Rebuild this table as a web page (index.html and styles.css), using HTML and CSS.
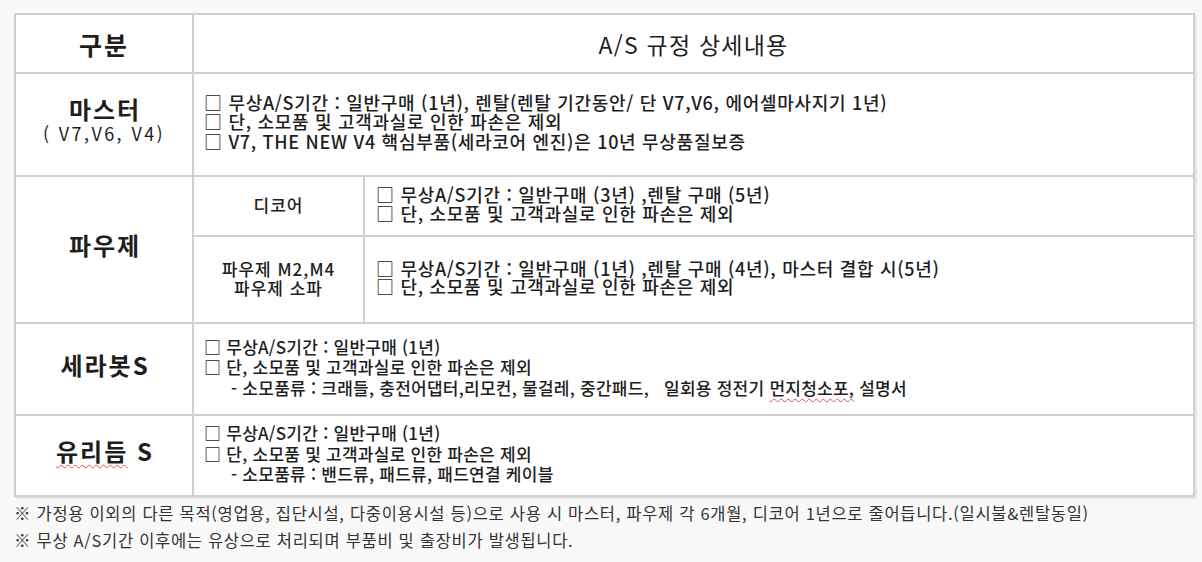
FILE: index.html
```html
<!DOCTYPE html>
<html lang="ko">
<head>
<meta charset="utf-8">
<title>A/S 규정</title>
<link rel="stylesheet" href="styles.css">
</head>
<body>
<div class="page">
  <table class="as-table">
    <colgroup>
      <col class="c-cat">
      <col class="c-sub">
      <col class="c-detail">
    </colgroup>
    <tr class="r-head">
      <th class="h-cat">구분</th>
      <th class="h-detail" colspan="2">A/S 규정 상세내용</th>
    </tr>
    <tr class="r-master">
      <td class="cat">
        <div class="cat-name">마스터</div>
        <div class="cat-sub">( V7,V6, V4)</div>
      </td>
      <td class="detail" colspan="2">
        <div>□ 무상A/S기간 : 일반구매 (1년), 렌탈(렌탈 기간동안/ 단 V7,V6, 에어셀마사지기 1년)</div>
        <div>□ 단, 소모품 및 고객과실로 인한 파손은 제외</div>
        <div>□ V7, THE NEW V4 핵심부품(세라코어 엔진)은 10년 무상품질보증</div>
      </td>
    </tr>
    <tr class="r-decore">
      <td class="cat" rowspan="2"><div class="cat-name">파우제</div></td>
      <td class="sub">디코어</td>
      <td class="detail sub-detail">
        <div>□ 무상A/S기간 : 일반구매 (3년) ,렌탈 구매 (5년)</div>
        <div>□ 단, 소모품 및 고객과실로 인한 파손은 제외</div>
      </td>
    </tr>
    <tr class="r-pauje">
      <td class="sub">
        <div>파우제 M2,M4</div>
        <div>파우제 소파</div>
      </td>
      <td class="detail sub-detail">
        <div>□ 무상A/S기간 : 일반구매 (1년) ,렌탈 구매 (4년), 마스터 결합 시(5년)</div>
        <div>□ 단, 소모품 및 고객과실로 인한 파손은 제외</div>
      </td>
    </tr>
    <tr class="r-serabot">
      <td class="cat"><div class="cat-name">세라봇S</div></td>
      <td class="detail small-detail" colspan="2">
        <div>□ 무상A/S기간 : 일반구매 (1년)</div>
        <div>□ 단, 소모품 및 고객과실로 인한 파손은 제외</div>
        <div class="indent">- 소모품류 : 크래들, 충전어댑터,리모컨, 물걸레, 중간패드, &nbsp; 일회용 정전기 <span class="spell">먼지청소포,</span> 설명서</div>
      </td>
    </tr>
    <tr class="r-yurideum">
      <td class="cat"><div class="cat-name"><span class="spell">유리듬</span> S</div></td>
      <td class="detail small-detail" colspan="2">
        <div>□ 무상A/S기간 : 일반구매 (1년)</div>
        <div>□ 단, 소모품 및 고객과실로 인한 파손은 제외</div>
        <div class="indent">- 소모품류 : 밴드류, 패드류, 패드연결 케이블</div>
      </td>
    </tr>
  </table>
  <div class="notes">
    <p>※ 가정용 이외의 다른 목적(영업용, 집단시설, 다중이용시설 등)으로 사용 시 마스터, 파우제 각 6개월, 디코어 1년으로 줄어듭니다.(일시불&amp;렌탈동일)</p>
    <p>※ 무상 A/S기간 이후에는 유상으로 처리되며 부품비 및 출장비가 발생됩니다.</p>
  </div>
</div>
</body>
</html>
```

FILE: styles.css
```css
html, body {
  margin: 0;
  padding: 0;
  background: #f9f9f9;
}

.page {
  padding: 13px 0 0 14px;
  width: 1179px;
}

.as-table {
  width: 1179px;
  border-collapse: collapse;
  table-layout: fixed;
  background: #fff;
  font-family: "Noto Sans CJK KR", "Noto Sans", sans-serif;
  color: #1e1e1e;
  box-shadow: 2px 2px 0 #e6e6e6;
}

.c-cat { width: 178px; }
.c-sub { width: 171px; }
.c-detail { width: 830px; }

.as-table th,
.as-table td {
  border: 2px solid #d0d0d0;
  padding: 0;
  vertical-align: middle;
}

.r-head { height: 59px; }
.r-master { height: 103px; }
.r-decore { height: 60px; }
.r-pauje { height: 87px; }
.r-serabot { height: 92px; }
.r-yurideum { height: 81px; }

.as-table .h-cat {
  font-size: 25px;
  font-weight: 600;
  letter-spacing: 2px;
  text-align: center;
}

.as-table .h-detail {
  font-size: 23px;
  font-weight: 400;
  letter-spacing: 1.2px;
  text-align: center;
}

.as-table .cat {
  text-align: center;
  padding-bottom: 9px;
}

.cat-name {
  font-size: 24px;
  font-weight: 600;
  line-height: 26px;
  letter-spacing: 2px;
  padding-left: 2px;
}

.cat-sub {
  font-size: 18px;
  font-weight: 400;
  line-height: 22px;
  letter-spacing: 2.4px;
}

.as-table .sub {
  text-align: center;
  font-size: 17px;
  font-weight: 500;
  line-height: 19px;
  letter-spacing: 1px;
  padding-bottom: 4px;
}

.as-table .detail {
  font-size: 18px;
  font-weight: 500;
  line-height: 19.5px;
  padding: 0 0 5px 10px;
  letter-spacing: 0.7px;
}

.as-table .sub-detail {
  padding-left: 11px;
  line-height: 18.5px;
}

.as-table .small-detail {
  font-size: 17px;
  letter-spacing: 0.25px;
  line-height: 20.5px;
  padding-bottom: 3px;
}

.indent {
  padding-left: 27px;
}

.spell {
  text-decoration: underline wavy #e05050;
  text-decoration-thickness: 1px;
  text-underline-offset: 3px;
}

.notes {
  padding-top: 3px;
  font-family: "Noto Sans CJK KR", "Noto Sans", sans-serif;
  font-size: 16.5px;
  letter-spacing: 0.7px;
  color: #333;
}

.notes p {
  margin: 0;
  line-height: 27px;
}
```
